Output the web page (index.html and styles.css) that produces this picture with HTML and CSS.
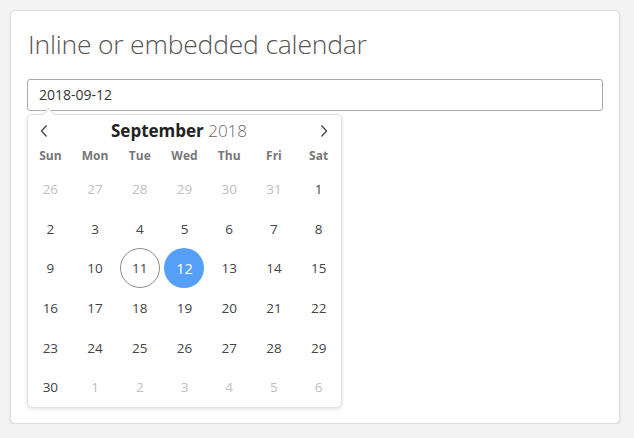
FILE: index.html
```html
<!DOCTYPE html>
<html>
<head>
<meta charset="utf-8">
<link rel="stylesheet" href="styles.css">
</head>
<body>
<div class="card">
  <h1 class="title">Inline or embedded calendar</h1>
  <div class="field">2018-09-12</div>
  <div class="picker">
    <span class="caret"></span>
    <div class="nav">
      <svg class="chev" width="10" height="14" viewBox="0 0 10 14"><path d="M7.5 1.5 L2.5 7 L7.5 12.5" fill="none" stroke="#444" stroke-width="1.3"/></svg>
      <div class="month"><b>September</b> <span class="year">2018</span></div>
      <svg class="chev" width="10" height="14" viewBox="0 0 10 14"><path d="M2.5 1.5 L7.5 7 L2.5 12.5" fill="none" stroke="#444" stroke-width="1.3"/></svg>
    </div>
    <div class="weekdays">
      <span>Sun</span><span>Mon</span><span>Tue</span><span>Wed</span><span>Thu</span><span>Fri</span><span>Sat</span>
    </div>
    <div class="days">
      <span class="d muted">26</span><span class="d muted">27</span><span class="d muted">28</span><span class="d muted">29</span><span class="d muted">30</span><span class="d muted">31</span><span class="d">1</span>
      <span class="d">2</span><span class="d">3</span><span class="d">4</span><span class="d">5</span><span class="d">6</span><span class="d">7</span><span class="d">8</span>
      <span class="d">9</span><span class="d">10</span><span class="d"><i class="today">11</i></span><span class="d"><i class="sel">12</i></span><span class="d">13</span><span class="d">14</span><span class="d">15</span>
      <span class="d">16</span><span class="d">17</span><span class="d">18</span><span class="d">19</span><span class="d">20</span><span class="d">21</span><span class="d">22</span>
      <span class="d">23</span><span class="d">24</span><span class="d">25</span><span class="d">26</span><span class="d">27</span><span class="d">28</span><span class="d">29</span>
      <span class="d">30</span><span class="d muted">1</span><span class="d muted">2</span><span class="d muted">3</span><span class="d muted">4</span><span class="d muted">5</span><span class="d muted">6</span>
    </div>
  </div>
</div>
</body>
</html>
```
FILE: styles.css
```css
html, body {
  margin: 0;
  padding: 0;
  background: #f3f3f3;
  font-family: "Open Sans", "Noto Sans", sans-serif;
}
.card {
  margin: 10px 0 0 10px;
  width: 610px;
  height: 414px;
  box-sizing: border-box;
  background: #fff;
  border: 1px solid #dedede;
  border-radius: 5px;
  box-shadow: 0 1px 2px rgba(0,0,0,0.12);
  padding: 16px 16px 0 16px;
}
.title {
  margin: 0 0 0 1px;
  font-size: 26.5px;
  font-weight: 300;
  line-height: 34px;
  color: #555;
  letter-spacing: -0.2px;
}
.field {
  margin-top: 18px;
  height: 32px;
  box-sizing: border-box;
  border: 1px solid #aaa;
  border-radius: 3px;
  padding: 0 11px;
  font-size: 14px;
  line-height: 30px;
  color: #333;
}
.picker {
  position: relative;
  margin-top: 3px;
  width: 315px;
  box-sizing: border-box;
  background: #fff;
  border: 1px solid #e2e2e2;
  border-radius: 5px;
  box-shadow: 0 1px 4px rgba(0,0,0,0.12);
}
.caret {
  position: absolute;
  top: -5px;
  left: 16px;
  width: 8px;
  height: 8px;
  background: #fff;
  border-left: 1px solid #ddd;
  border-top: 1px solid #ddd;
  transform: rotate(45deg);
}
.nav {
  display: flex;
  align-items: center;
  justify-content: space-between;
  height: 32px;
  padding: 0 12px 0 11px;
}
.chev { display: block; }
.month {
  font-size: 17px;
  color: #222;
  line-height: 20px;
  margin-right: 10px;
}
.month b { font-weight: 700; }
.year { font-weight: 300; color: #666; }
.weekdays {
  display: grid;
  grid-template-columns: repeat(7, 1fr);
  height: 20px;
  font-size: 12px;
  font-weight: 700;
  color: #777;
  text-align: center;
  line-height: 18px;
}
.days {
  display: grid;
  grid-template-columns: repeat(7, 1fr);
  grid-auto-rows: 39.7px;
  padding-top: 2px;
}
.d {
  display: flex;
  align-items: center;
  justify-content: center;
  font-size: 13.5px;
  color: #444;
}
.d.muted { color: #c0c0c0; }
.today, .sel {
  font-style: normal;
  display: flex;
  align-items: center;
  justify-content: center;
  width: 40px;
  height: 40px;
  box-sizing: border-box;
  border-radius: 50%;
}
.today { border: 1px solid #8f8f8f; }
.sel { background: #569ff6; color: #fff; font-size: 14.5px; }
```
